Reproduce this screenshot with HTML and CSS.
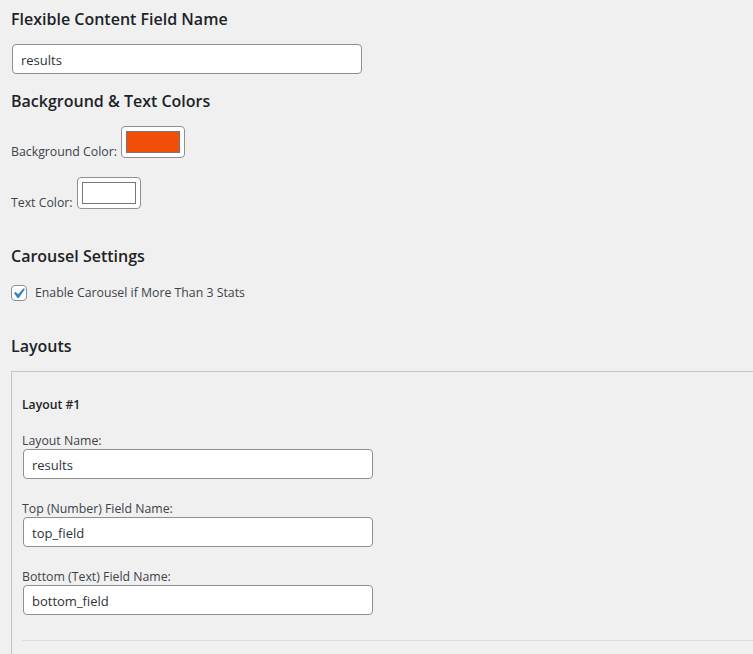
FILE: index.html
```html
<!DOCTYPE html>
<html>
<head>
<meta charset="utf-8">
<link rel="stylesheet" href="styles.css">
</head>
<body>
<div class="page">
  <h2 class="h-first">Flexible Content Field Name</h2>
  <div class="text-input top-input">results</div>

  <h2 class="h-colors">Background &amp; Text Colors</h2>
  <div class="color-row row-bg">
    <span class="color-label">Background Color:</span>
    <span class="color-box"><span class="swatch swatch-orange"></span></span>
  </div>
  <div class="color-row row-text">
    <span class="color-label">Text Color:</span>
    <span class="color-box"><span class="swatch swatch-white"></span></span>
  </div>

  <h2 class="h-carousel">Carousel Settings</h2>
  <div class="check-row">
    <span class="checkbox">
      <svg viewBox="0 0 20 20" width="21" height="21"><path d="M14.83 4.89l1.34.94-5.81 8.38H9.02L5.78 9.67l1.34-1.25 2.57 2.4z" fill="#3582c4"/></svg>
    </span>
    <span class="check-label">Enable Carousel if More Than 3 Stats</span>
  </div>

  <h2 class="h-layouts">Layouts</h2>
  <div class="layouts">
    <div class="layout-title">Layout #1</div>
    <div class="field first-field">
      <div class="field-label">Layout Name:</div>
      <div class="text-input">results</div>
    </div>
    <div class="field">
      <div class="field-label">Top (Number) Field Name:</div>
      <div class="text-input">top_field</div>
    </div>
    <div class="field">
      <div class="field-label">Bottom (Text) Field Name:</div>
      <div class="text-input">bottom_field</div>
    </div>
    <div class="divider"></div>
  </div>
</div>
</body>
</html>
```

FILE: styles.css
```css
html, body {
  margin: 0;
  padding: 0;
  background: #f0f0f0;
  overflow: hidden;
}
body {
  font-family: "Open Sans", "Noto Sans", sans-serif;
  color: #3c434a;
  font-size: 12.3px;
  width: 753px;
  height: 654px;
}
.page {
  padding-left: 11px;
}
h2 {
  margin: 0;
  font-size: 16px;
  line-height: 24px;
  font-weight: 600;
  color: #1d2327;
}
.h-first { margin-top: 7px; }
.h-colors { margin-top: 15px; }
.h-carousel { margin-top: 35px; }
.h-layouts { margin-top: 33px; }

.text-input {
  box-sizing: border-box;
  width: 350px;
  height: 30px;
  margin-left: 1px;
  background: #fff;
  border: 1px solid #8c8f94;
  border-radius: 4px;
  padding: 0 8px;
  font-size: 13px;
  line-height: 30px;
  color: #2c3338;
  overflow: hidden;
}
.top-input { margin-top: 13px; }

.color-row {
  display: flex;
  align-items: flex-end;
  height: 32px;
}
.row-bg { margin-top: 13px; }
.row-text { margin-top: 19px; }
.color-label {
  line-height: 18px;
  margin-bottom: -3px;
  margin-right: 4px;
  color: #3c434a;
}
.color-box {
  box-sizing: border-box;
  width: 64px;
  height: 32px;
  background: #fff;
  border: 1px solid #8c8f94;
  border-radius: 4px;
  padding: 4px;
  display: flex;
}
.swatch {
  flex: 1;
  border: 1px solid #767676;
}
.swatch-orange { background: #f14e08; }
.swatch-white { background: #fff; }

.check-row {
  display: flex;
  align-items: center;
  height: 16px;
  margin-top: 17px;
}
.checkbox {
  box-sizing: border-box;
  width: 16px;
  height: 16px;
  border: 1px solid #8c8f94;
  border-radius: 4px;
  background: #fff;
  position: relative;
  margin-right: 8px;
}
.checkbox svg {
  position: absolute;
  left: -4px;
  top: -3px;
}
.check-label {
  line-height: 18px;
  color: #3c434a;
}

.layouts {
  margin-top: 13px;
  margin-right: -20px;
  border-top: 1px solid #c3c4c7;
  border-left: 1px solid #c3c4c7;
  padding: 24px 0 20px 10px;
}
.layout-title {
  font-weight: 600;
  font-size: 12.2px;
  line-height: 18px;
  color: #1d2327;
}
.field {
  margin-top: 23px;
}
.first-field {
  margin-top: 20px;
}
.field-label {
  line-height: 14px;
  font-size: 12.3px;
  color: #3c434a;
  margin-bottom: 1px;
}
.divider {
  margin-top: 25px;
  border-top: 1px solid #dcdcde;
}
```
